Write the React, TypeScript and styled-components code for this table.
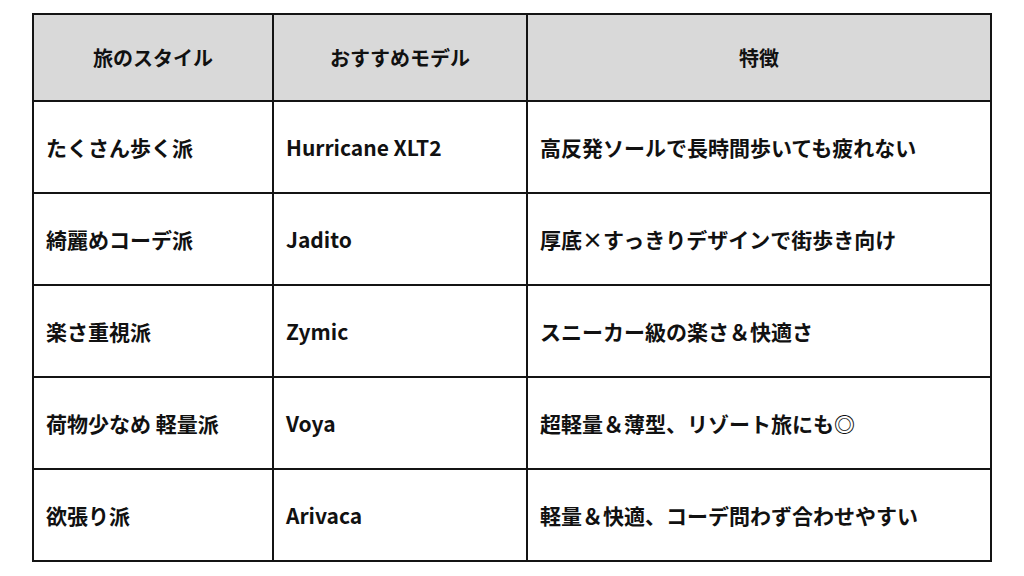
import styled, { createGlobalStyle } from "styled-components";

const GlobalStyle = createGlobalStyle`
  html, body {
    margin: 0;
    padding: 0;
    background: #ffffff;
  }
  body {
    font-family: "Noto Sans CJK JP", "Noto Sans", sans-serif;
    color: #111111;
  }
`;

const Page = styled.div`
  width: 1024px;
  height: 576px;
  padding: 13px 0 0 32px;
  box-sizing: border-box;
`;

const Table = styled.table`
  border-collapse: collapse;
  table-layout: fixed;
`;

const HeadCell = styled.th<{ $width: number }>`
  width: ${(p) => p.$width}px;
  height: 85px;
  background: #d9d9d9;
  border: 2px solid #141414;
  font-size: 20px;
  font-weight: 700;
  text-align: center;
  vertical-align: middle;
  padding: 0;
`;

const Cell = styled.td`
  height: 90px;
  border: 2px solid #141414;
  font-size: 21px;
  font-weight: 700;
  text-align: left;
  vertical-align: middle;
  padding: 0 0 0 12px;
  white-space: nowrap;
`;

const rows = [
  ["たくさん歩く派", "Hurricane XLT2", "高反発ソールで長時間歩いても疲れない"],
  ["綺麗めコーデ派", "Jadito", "厚底×すっきりデザインで街歩き向け"],
  ["楽さ重視派", "Zymic", "スニーカー級の楽さ＆快適さ"],
  ["荷物少なめ 軽量派", "Voya", "超軽量＆薄型、リゾート旅にも◎"],
  ["欲張り派", "Arivaca", "軽量＆快適、コーデ問わず合わせやすい"],
];

export default function App() {
  return (
    <>
      <GlobalStyle />
      <Page>
        <Table>
          <thead>
            <tr>
              <HeadCell $width={238}>旅のスタイル</HeadCell>
              <HeadCell $width={252}>おすすめモデル</HeadCell>
              <HeadCell $width={462}>特徴</HeadCell>
            </tr>
          </thead>
          <tbody>
            {rows.map((r) => (
              <tr key={r[0]}>
                {r.map((c) => (
                  <Cell key={c}>{c}</Cell>
                ))}
              </tr>
            ))}
          </tbody>
        </Table>
      </Page>
    </>
  );
}
